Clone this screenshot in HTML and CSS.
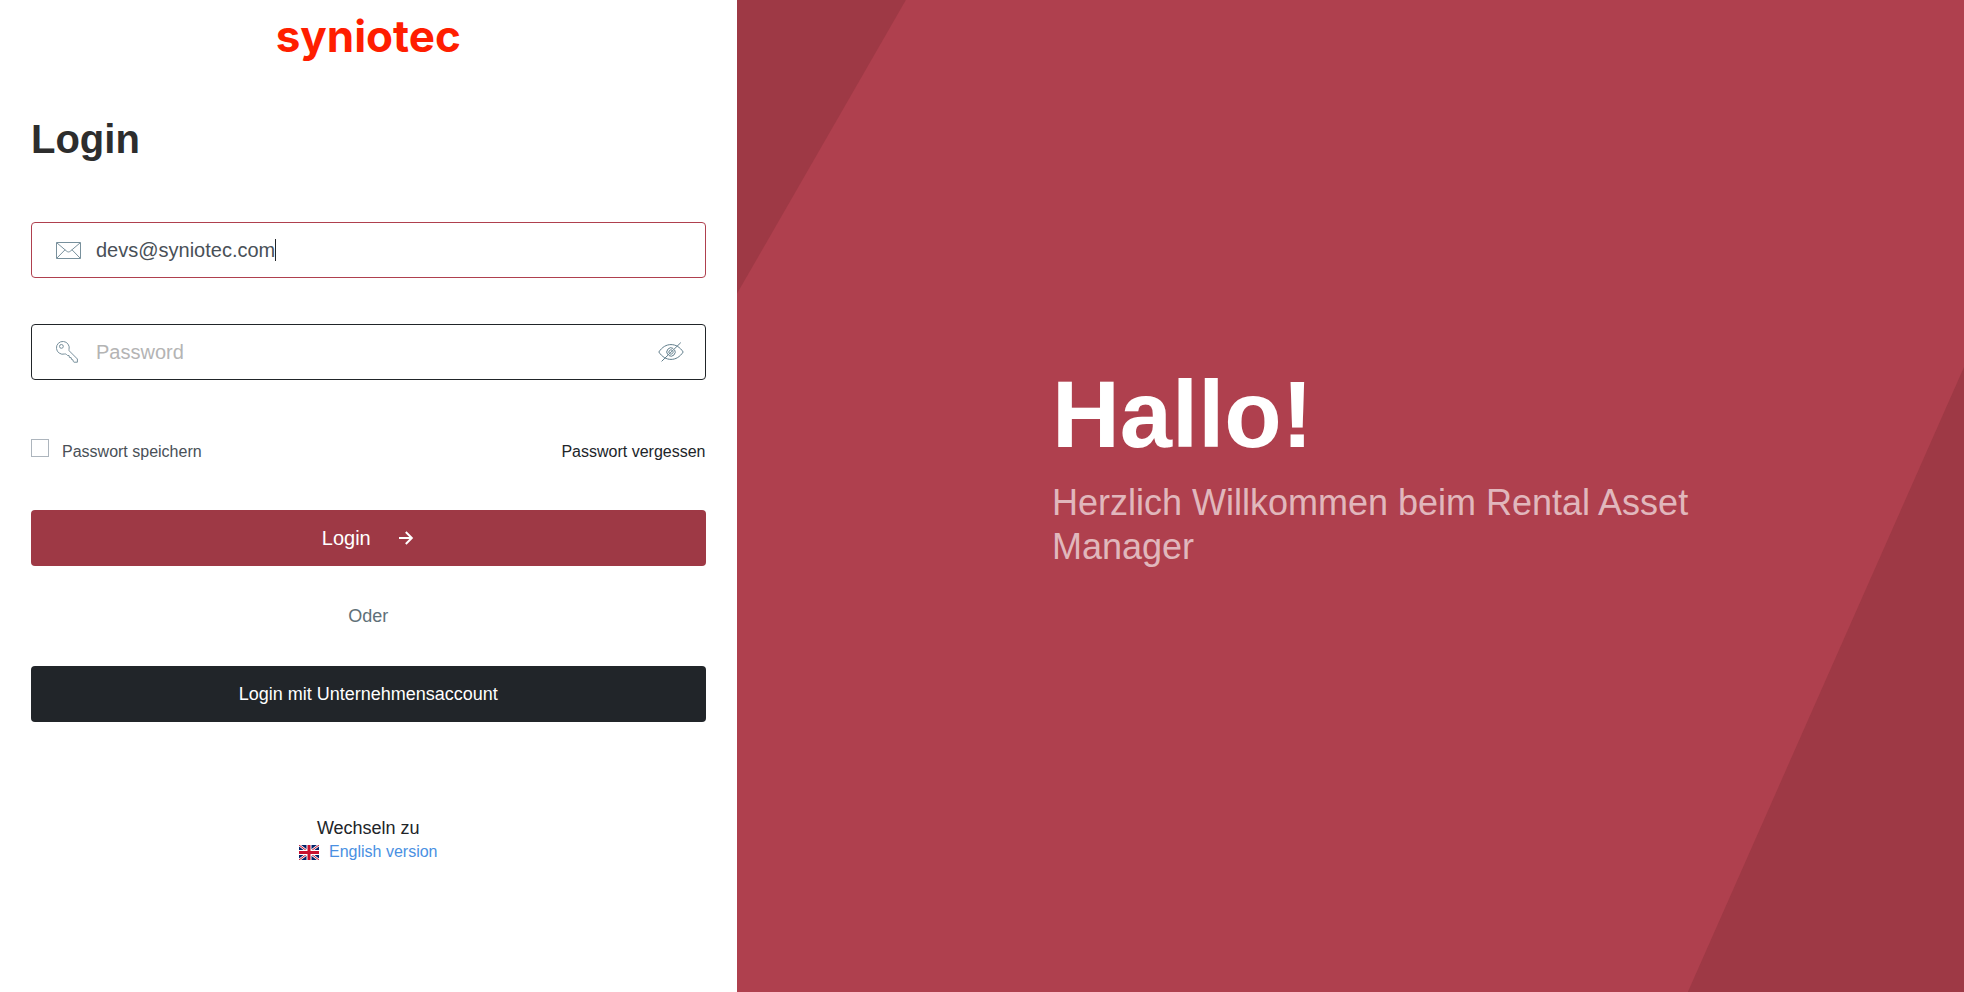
FILE: index.html
```html
<!DOCTYPE html>
<html lang="de">
<head>
<meta charset="utf-8">
<meta name="viewport" content="width=device-width, initial-scale=1">
<title>syniotec – Login</title>
<link rel="stylesheet" href="styles.css">
</head>
<body>
<div class="layout">
  <main class="panel">
    <div class="logo">syniotec</div>
    <h1 class="title">Login</h1>
    <form class="form">
      <label class="field field--active">
        <svg class="icon icon--mail" viewBox="0 0 25 17" aria-hidden="true">
          <path d="M.5.5h24v16H.5zM.8.8l9.900 8.400c1.200 1 2.400 1 3.600 0L24.200.8M.8 16.200l8.200-8.400M24.200 16.200 16 7.800"/>
        </svg>
        <input class="input input--email" type="email" value="devs@syniotec.com" aria-label="E-Mail">
        <span class="caret"></span>
      </label>
      <div class="field">
        <svg class="icon icon--key" viewBox="0 0 22 22" aria-hidden="true">
          <circle cx="5.400" cy="5.400" r="1.900"/>
          <path d="M13 8.600A6.400 6.400 0 1 0 8.600 13c.7-.2 1.400 0 1.900.5l.9.9 1.700.2.3 1.800 1.800.3.3 1.700 1.400.4.4 1.700.7.7h3.400v-3.200l-8-8c-.5-.5-.6-.9-.4-1.400z"/>
        </svg>
        <input class="input" type="password" placeholder="Password" aria-label="Password">
        <button class="toggle" type="button" aria-label="Passwort anzeigen">
          <svg class="icon icon--eye" viewBox="0 0 26 20" aria-hidden="true">
            <path d="M.8 10C4.200 5 8.300 2.600 13 2.600S21.800 5 25.200 10C21.800 15 17.700 17.400 13 17.400S4.200 15 .8 10z"/>
            <path d="M15.200 6.400A4.200 4.200 0 0 0 9.800 12.700M16.600 7.800A4.200 4.200 0 0 1 10.900 13.600M14.200 8.200a2.200 2.200 0 0 0-2.900 3.200M15 9.200a2.200 2.200 0 0 1-2.800 2.800"/>
            <path d="M3.600 19.400 22.800.6"/>
          </svg>
        </button>
      </div>
      <div class="options">
        <label class="remember"><input class="checkbox" type="checkbox"><span>Passwort speichern</span></label>
        <a class="forgot" href="#">Passwort vergessen</a>
      </div>
      <button class="button button--primary" type="submit">
        <span>Login</span>
        <svg class="arrow" viewBox="0 0 16 14" aria-hidden="true"><path d="M0 7h12.500M6.800 1l6 6-6 6"/></svg>
      </button>
      <p class="or">Oder</p>
      <button class="button button--dark" type="button">Login mit Unternehmensaccount</button>
    </form>
    <div class="language">
      <span>Wechseln zu</span>
      <a class="language-link" href="#">
        <svg class="flag" viewBox="0 0 20 15" aria-hidden="true">
          <path fill="#012169" d="M0 0h20v15H0z"/>
          <path stroke="#fff" stroke-width="2.500" d="m0 0 20 15M20 0 0 15"/>
          <path stroke="#c8102e" stroke-width="1" d="m0 0 20 15M20 0 0 15"/>
          <path stroke="#fff" stroke-width="5" d="M10 0v15M0 7.500h20"/>
          <path stroke="#c8102e" stroke-width="3" d="M10 0v15M0 7.500h20"/>
        </svg>
        <span>English version</span>
      </a>
    </div>
  </main>
  <section class="hero">
    <div class="welcome">
      <h2 class="greeting">Hallo!</h2>
      <p class="subtitle">Herzlich Willkommen beim Rental Asset Manager</p>
    </div>
  </section>
</div>
</body>
</html>
```

FILE: styles.css
```css
* {
  box-sizing: border-box;
}

body {
  margin: 0;
  font-family: "Liberation Sans", Arial, sans-serif;
  color: #212529;
  background: #fff;
}

a {
  text-decoration: none;
}

.layout {
  display: grid;
  grid-template-columns: 3fr 5fr;
  min-height: 100vh;
}

/* Login panel */
.panel {
  padding: 12px 31px;
}

.logo {
  font: bold 44px/48px Inter, sans-serif;
  color: #ff1e00;
  text-align: center;
}

.title {
  margin: 55px 0 0;
  font-size: 40px;
  line-height: 48px;
  color: #2d2d2d;
}

.form {
  display: flex;
  flex-direction: column;
  margin-top: 59px;
}

.field {
  display: flex;
  align-items: center;
  height: 56px;
  padding: 0 21px 0 24px;
  border: 1px solid #212529;
  border-radius: 4px;
}

.field--active {
  margin-bottom: 46px;
  border-color: #af404e;
}

.icon {
  flex: none;
  fill: none;
  stroke: #78909c;
  stroke-width: 1;
}

.icon--mail {
  width: 25px;
  height: 17px;
  margin-right: 15px;
}

.icon--key {
  width: 22px;
  height: 22px;
  margin-right: 18px;
}

.icon--eye {
  display: block;
  width: 26px;
  height: 20px;
  stroke: #607d8b;
}

.input {
  flex: 1;
  min-width: 0;
  padding: 0;
  border: 0;
  outline: 0;
  font: 20px/24px "Liberation Sans", Arial, sans-serif;
  color: #495057;
  background: transparent;
}

.input--email {
  flex: none;
  field-sizing: content;
  max-width: 90%;
}

.input::placeholder {
  color: #b4b4b4;
  opacity: 1;
}

.caret {
  width: 1px;
  height: 22px;
  background: #212529;
}

.toggle {
  padding: 0;
  border: 0;
  background: none;
}

.options {
  display: flex;
  justify-content: space-between;
  margin-top: 59px;
  font-size: 16px;
  line-height: 26px;
}

.remember {
  display: flex;
  gap: 13px;
  color: #495057;
}

.checkbox {
  width: 18px;
  height: 18px;
  margin: 0;
  appearance: none;
  border: 1px solid #adb5bd;
}

.forgot {
  color: #212529;
}

.button {
  display: flex;
  align-items: center;
  justify-content: center;
  height: 56px;
  border: 0;
  border-radius: 4px;
  font-family: inherit;
  color: #fff;
}

.button--primary {
  gap: 28px;
  margin-top: 45px;
  font-size: 20px;
  background: #9e3945;
}

.button--dark {
  font-size: 18px;
  background: #212529;
}

.arrow {
  width: 16px;
  height: 14px;
  fill: none;
  stroke: #fff;
  stroke-width: 2;
}

.or {
  margin: 38px 0;
  font-size: 18px;
  line-height: 24px;
  text-align: center;
  color: #607078;
}

.language {
  display: flex;
  flex-direction: column;
  align-items: center;
  margin-top: 94px;
  font-size: 18px;
  line-height: 24px;
}

.language-link {
  display: flex;
  align-items: center;
  gap: 10px;
  font-size: 16px;
  color: #4a90e2;
}

.flag {
  width: 20px;
  height: 15px;
}

/* Welcome area */
.hero {
  position: relative;
  display: flex;
  align-items: center;
  padding: 0 20% 66px 25.7%;
  background: #af404e;
}

.hero::before,
.hero::after {
  content: "";
  position: absolute;
  background: #9e3945;
}

.hero::before {
  top: 0;
  left: 0;
  width: 13.8%;
  height: 29.7%;
  clip-path: polygon(0 0, 100% 0, 0 100%);
}

.hero::after {
  right: 0;
  bottom: 0;
  width: 22.5%;
  height: 63%;
  clip-path: polygon(100% 0, 100% 100%, 0 100%);
}

.greeting {
  margin: 0;
  font-size: 94px;
  line-height: 116px;
  color: #fff;
}

.subtitle {
  margin: 8px 0 0;
  font-size: 36px;
  line-height: 44px;
  color: rgba(255, 255, 255, 0.64);
}
```
